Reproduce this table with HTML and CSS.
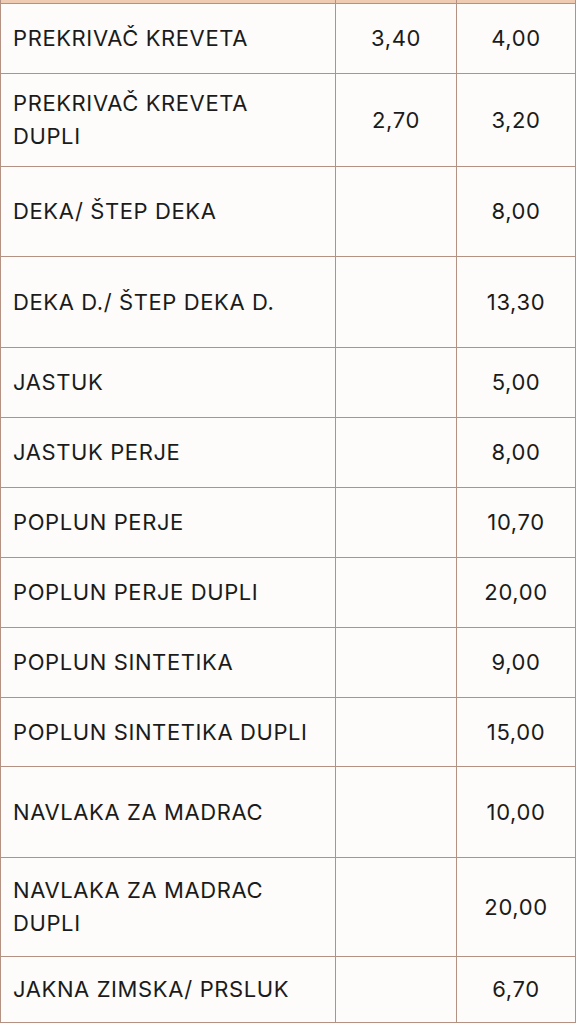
FILE: index.html
```html
<!DOCTYPE html>
<html>
<head>
    <title>Cjenik</title>
    <link rel="stylesheet" href="styles.css">
</head>
<body>
    <table class="price-table">
        <colgroup>
            <col class="col-name">
            <col class="col-price">
            <col class="col-price2">
        </colgroup>
        <tr class="cut"><td></td><td></td><td></td></tr>
        <tr class="h70"><td class="name">PREKRIVAČ KREVETA</td><td>3,40</td><td>4,00</td></tr>
        <tr class="h93"><td class="name">PREKRIVAČ KREVETA<br>DUPLI</td><td>2,70</td><td>3,20</td></tr>
        <tr class="h90"><td class="name">DEKA/ ŠTEP DEKA</td><td></td><td>8,00</td></tr>
        <tr class="h91"><td class="name">DEKA D./ ŠTEP DEKA D.</td><td></td><td>13,30</td></tr>
        <tr class="h70"><td class="name">JASTUK</td><td></td><td>5,00</td></tr>
        <tr class="h70"><td class="name">JASTUK PERJE</td><td></td><td>8,00</td></tr>
        <tr class="h70"><td class="name">POPLUN PERJE</td><td></td><td>10,70</td></tr>
        <tr class="h70"><td class="name">POPLUN PERJE DUPLI</td><td></td><td>20,00</td></tr>
        <tr class="h70"><td class="name">POPLUN SINTETIKA</td><td></td><td>9,00</td></tr>
        <tr class="h69"><td class="name">POPLUN SINTETIKA DUPLI</td><td></td><td>15,00</td></tr>
        <tr class="h91"><td class="name">NAVLAKA ZA MADRAC</td><td></td><td>10,00</td></tr>
        <tr class="h99"><td class="name">NAVLAKA ZA MADRAC<br>DUPLI</td><td></td><td>20,00</td></tr>
        <tr class="h66"><td class="name">JAKNA ZIMSKA/ PRSLUK</td><td></td><td>6,70</td></tr>
    </table>
</body>
</html>
```
FILE: styles.css
```css
body {
    margin: 0;
    background-color: #fdfcfa;
    font-family: Inter, sans-serif;
    color: #1b1b1b;
}
.price-table {
    border-collapse: collapse;
    table-layout: fixed;
    width: 575px;
}
.col-name { width: 335px; }
.col-price { width: 121px; }
.col-price2 { width: 119px; }
.price-table td {
    border: 1px solid #b39283;
    padding: 0;
    font-size: 22px;
    letter-spacing: 0.6px;
    line-height: 33px;
    text-align: center;
    vertical-align: middle;
}
.price-table td.name {
    text-align: left;
    padding-left: 12px;
}
.price-table tr.cut td {
    border-top: none;
    height: 3px;
    line-height: 0;
    background-color: #efcbb3;
}
.h66 { height: 66px; }
.h69 { height: 69px; }
.h70 { height: 70px; }
.h90 { height: 90px; }
.h91 { height: 91px; }
.h93 { height: 93px; }
.h99 { height: 99px; }
```
